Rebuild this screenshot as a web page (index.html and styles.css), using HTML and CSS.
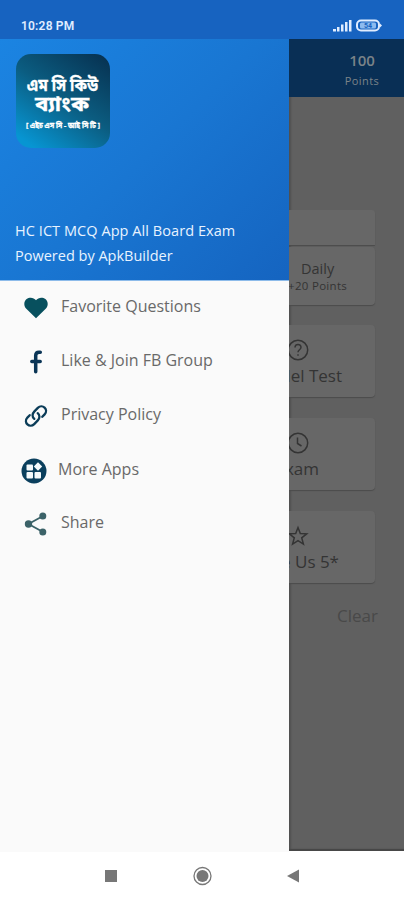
FILE: index.html
```html
<!DOCTYPE html>
<html lang="en">
<head>
<meta charset="utf-8">
<title>HC ICT MCQ App</title>
<link rel="stylesheet" href="styles.css">
</head>
<body>
<div class="phone">
  <header class="status">
    <span class="time">10:28 PM</span>
    <svg class="status-icons" width="50" height="14" viewBox="0 0 50 14">
      <g fill="#e0edff"><rect x="0" y="10" width="3" height="2.5"/><rect x="4" y="8" width="2.5" height="4.5"/><rect x="8" y="5.5" width="2.5" height="7"/><rect x="12" y="3" width="2.5" height="9.5"/><rect x="16" y="1" width="2.5" height="11.5"/></g>
      <rect x="24" y="1.5" width="22" height="10" rx="4" fill="none" stroke="#e0edff" stroke-width="2"/>
      <rect x="27" y="3.5" width="16" height="6" rx="1.5" fill="#8dbbef"/>
      <path d="M47 4.5l2 2-2 2z" fill="#e0edff"/>
      <text x="31" y="9.4" class="battery">54</text>
    </svg>
  </header>
  <div class="main">
    <aside class="drawer">
      <div class="hero">
        <svg class="logo" width="94" height="94" viewBox="0 0 94 94">
          <defs><linearGradient id="lg" x1=".9" y1="0" x2=".2" y2="1"><stop offset="0" stop-color="#073353"/><stop offset=".5" stop-color="#0b5c80"/><stop offset="1" stop-color="#0795d2"/></linearGradient></defs>
          <rect width="94" height="94" rx="15" fill="url(#lg)"/>
          <g class="bn">
            <text x="11" y="37" font-size="17" textLength="71" lengthAdjust="spacingAndGlyphs">এম সি কিউ</text>
            <text x="19" y="57" font-size="21" textLength="54" lengthAdjust="spacingAndGlyphs">ব্যাংক</text>
            <text x="10" y="74" font-size="7.5" textLength="74" lengthAdjust="spacingAndGlyphs">[ এইচ এস সি - আই সি টি ]</text>
          </g>
        </svg>
        <div class="hero-text"><p class="title">HC ICT MCQ App All Board Exam</p><p class="powered">Powered by ApkBuilder</p></div>
      </div>
      <nav class="menu">
        <a class="item fav"><svg width="24" height="24" viewBox="0 0 24 24"><path d="M12 22.3 2.3 12.7C-.6 9.7-.2 5.2 2.6 3 5.500.8 9.800 1.300 12 4.300 14.200 1.300 18.500.8 21.400 3c2.800 2.200 3.200 6.700.3 9.700z" fill="#07505e"/></svg><span>Favorite Questions</span></a>
        <a class="item fb"><svg width="24" height="24" viewBox="0 0 24 24"><path d="M16.300 2.200H15q-3.300 0-3.300 3.400V21.800M7.800 11.600h8.400" fill="none" stroke="#0a3556" stroke-width="3.500" stroke-linecap="round" stroke-linejoin="round"/></svg><span>Like &amp; Join FB Group</span></a>
        <a class="item privacy"><svg width="24" height="24" viewBox="0 0 24 24"><g fill="none" stroke="#0b3c58" stroke-width="2.300" stroke-linecap="round"><path d="M10.300 14.800C7.800 12.800 8.200 9.700 10.200 7.600l3.600-3.700c4.600-4.600 11.200 1.600 6.800 6.500l-2.300 2.400"/><path d="M13.700 9.200c2.500 2 2.100 5.100.1 7.200l-3.600 3.700c-4.600 4.600-11.200-1.600-6.800-6.500l2.300-2.400"/></g></svg><span>Privacy Policy</span></a>
        <a class="item more"><svg width="26" height="26" viewBox="0 0 26 26"><circle cx="13" cy="13" r="12.500" fill="#0a3f5d"/><g fill="#f5fafc"><rect x="5.500" y="6.500" width="6.500" height="6" rx="1"/><rect x="5.500" y="14" width="6.500" height="6.500" rx="1"/><rect x="13.500" y="14" width="6.500" height="6.500" rx="1"/><path d="M17 4.300 21.200 8.500 17 12.700 12.800 8.500z"/></g></svg><span>More Apps</span></a>
        <a class="item share"><svg width="24" height="24" viewBox="0 0 24 24"><path d="M19 4 4.500 12 19 20" fill="none" stroke="#3b6268" stroke-width="1.800"/><g fill="#3b6268"><circle cx="18.800" cy="4" r="3.500"/><circle cx="4.500" cy="12" r="3.700"/><circle cx="18.800" cy="20" r="3.500"/></g></svg><span>Share</span></a>
      </nav>
    </aside>
    <section class="behind">
      <div class="points"><b>100</b><span>Points</span></div>
      <div class="card blank"></div>
      <div class="card daily"><span>Daily</span><small>+20 Points</small></div>
      <div class="card tile test"><svg width="24" height="24" viewBox="0 0 24 24"><circle cx="12" cy="12" r="9.700"/><path d="M9 9.500c0-4 6-4 6-.2 0 2.500-3 2.400-3 5M12 16.300v1.500"/></svg><span>Model Test</span></div>
      <div class="card tile exam"><svg width="24" height="24" viewBox="0 0 24 24"><circle cx="12" cy="12" r="9.700"/><path d="M11.500 6.500v6l4 2.500"/></svg><span>Exam</span></div>
      <div class="card tile rate"><svg width="24" height="24" viewBox="0 0 24 24"><path d="m12 3.500 2.300 6 6.400.3-5 4 1.700 6.300-5.400-3.500-5.400 3.500 1.700-6.300-5-4 6.400-.3z"/></svg><span>Rate Us 5*</span></div>
      <span class="clear">Clear</span>
    </section>
  </div>
  <footer class="navbar">
    <svg width="404" height="48" viewBox="0 0 404 48"><g fill="#777"><rect x="105" y="18" width="12" height="12"/><circle cx="202.500" cy="24" r="6"/><path d="M287 24 299 17.500v13z"/></g><circle cx="202.500" cy="24" r="8.500" fill="none" stroke="#777" stroke-width="1.300"/></svg>
  </footer>
</div>
</body>
</html>
```
FILE: styles.css
```css
* { box-sizing: border-box; }
body { margin: 0; font-family: "Open Sans", "Noto Sans", sans-serif; background: #fff; }
p { margin: 0; }
svg { display: block; flex: none; }
.phone { width: 404px; height: 900px; display: flex; flex-direction: column; overflow: hidden; }
.status { height: 39px; flex: none; background: #1763c0; display: flex; justify-content: space-between; padding: 19px 21px 0; }
.time { font: 600 12px/14px Roboto, sans-serif; color: #e0edff; letter-spacing: .2px; }
.battery { font: 700 7px Roboto, sans-serif; fill: #1763c0; }
.main { height: 813px; flex: none; display: flex; }
.drawer { width: 289px; flex: none; background: #fafafa; }
.hero { height: 242px; padding: 15px 15px 0; background: linear-gradient(135deg, #1b84e2, #1976d2 50%, #1564c0); border-bottom: 1px solid #8dbbea; display: flex; flex-direction: column; }
.logo { margin-left: 1px; }
.bn { font-family: "Noto Sans Bengali", "Noto Sans", sans-serif; font-weight: 700; fill: #fff; stroke: #fff; stroke-width: .3px; }
.hero-text { margin-top: 70px; color: #e8f3ff; font-size: 14.500px; line-height: 25px; font-weight: 500; white-space: nowrap; }
.title { letter-spacing: .06px; }
.menu { padding-left: 24px; display: flex; flex-direction: column; }
.item { display: flex; align-items: center; height: 54.500px; color: #696969; font-size: 16px; line-height: 24px; gap: 13px; white-space: nowrap; }
.item span { padding-bottom: 4px; }
.fav { height: 53.500px; }
.more { margin-left: -3px; gap: 11px; }
.share { height: 52px; }
.behind { width: 115px; height: 812px; background: #606060; border-bottom: 2px solid #474747; overflow: hidden; color: #343434; display: flex; flex-direction: column; box-shadow: inset 2px 0 2px #505050; }
.points { height: 58px; flex: none; padding: 10px 0 0 31px; width: 115px; background: #092f55; color: #7b8388; display: flex; flex-direction: column; align-items: center; }
.points b { font-size: 15px; line-height: 22px; font-weight: 600; }
.points span { font-size: 11px; line-height: 19px; letter-spacing: .4px; }
.card { background: #676767; width: 86px; flex: none; border-radius: 0 4px 4px 0; box-shadow: 0 1px 1px #4c4c4c; }
.blank { margin-top: 113px; height: 35px; border-radius: 0 3px 0 0; }
.daily { margin-top: 2px; height: 58px; padding: 12px 0 0 1px; display: flex; flex-direction: column; white-space: nowrap; }
.daily span { font-size: 14.500px; line-height: 19px; padding-left: 11px; }
.daily small { font-size: 11.500px; line-height: 16px; margin-left: -2px; letter-spacing: .3px; }
.tile { height: 72px; margin-top: 20px; padding: 13px 0 0; display: flex; flex-direction: column; overflow: hidden; white-space: nowrap; }
.tile svg { margin-left: -3px; fill: none; stroke: #343434; stroke-width: 1.500; }
.tile span { font-size: 17px; line-height: 27px; align-self: flex-end; }
.test span { margin-right: 33px; }
.exam { margin-top: 21px; }
.exam span { margin-right: 56px; }
.rate { margin-top: 21px; }
.rate span { margin-right: 36px; }
.clear { align-self: flex-end; margin: 20px 26px 0 0; font-size: 17px; line-height: 26px; color: #494949; }
.navbar { height: 48px; flex: none; background: #fff; }
```
